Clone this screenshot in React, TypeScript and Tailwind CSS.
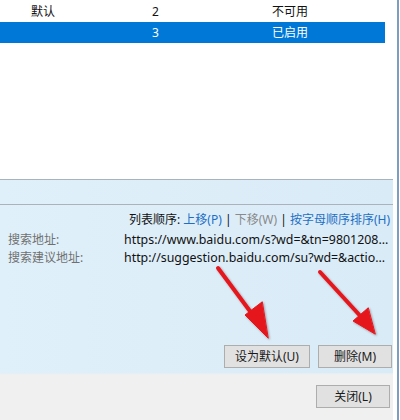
import React from "react";

const font = { fontFamily: '"Noto Sans", "Noto Sans CJK SC", sans-serif' };

function Btn({ children, w }: { children: React.ReactNode; w: string }) {
  return (
    <div
      className={`${w} h-[23px] flex items-center justify-center border border-[#adadad] bg-[#e1e1e1] text-[12px] text-[#1a1a1a]`}
    >
      {children}
    </div>
  );
}

export default function App() {
  return (
    <div className="relative w-[400px] h-[420px] bg-white flex overflow-hidden" style={font}>
      <div className="w-[393px] h-full flex flex-col">
        {/* list */}
        <div className="h-[180px] bg-white border-b border-[#a7b4bd] flex flex-col pt-[1px]">
          <div className="h-[21px] flex items-center text-[12px] text-[#111] pt-[1px]">
            <span className="w-[152px] pl-[31px]">默认</span>
            <span className="w-[120px]">2</span>
            <span>不可用</span>
          </div>
          <div className="h-[21px] w-[385px] flex items-center text-[12px] text-white bg-[#0078d7]">
            <span className="w-[152px] pl-[31px]"></span>
            <span className="w-[120px]">3</span>
            <span>已启用</span>
          </div>
        </div>
        {/* panel */}
        <div className="h-[193px] bg-gradient-to-r from-[#e0f0fa] to-[#d9ebf7] flex flex-col">
          <div className="h-[25px] border-b border-[#a9b3b9]"></div>
          <div className="h-[26px] flex items-center justify-end pr-[3px] text-[12px] pt-[4px]">
            <span className="text-[#111]">列表顺序:&nbsp;</span>
            <span className="text-[#1e6fc4]">上移(P)</span>
            <span className="text-[#111]">&nbsp;|&nbsp;</span>
            <span className="text-[#8a8a8a]">下移(W)</span>
            <span className="text-[#111]">&nbsp;|&nbsp;</span>
            <span className="text-[#1e6fc4]">按字母顺序排序(H)</span>
          </div>
          <div className="h-[18px] flex items-center text-[12px]">
            <span className="w-[124px] pl-[8px] text-[#707070]">搜索地址:</span>
            <span className="text-[#111] text-[12.4px]">https://www.baidu.com/s?wd=&amp;tn=9801208...</span>
          </div>
          <div className="h-[18px] flex items-center text-[12px]">
            <span className="w-[124px] pl-[8px] text-[#707070]">搜索建议地址:</span>
            <span className="text-[#111] text-[12.4px]">http://suggestion.baidu.com/su?wd=&amp;actio...</span>
          </div>
          <div className="flex-1"></div>
          <div className="flex justify-end gap-[8px] pr-[1px] pb-[5px]">
            <Btn w="w-[86px]">设为默认(U)</Btn>
            <Btn w="w-[74px]">删除(M)</Btn>
          </div>
        </div>
        <div className="h-[2px] bg-gradient-to-b from-[#e4eef4] to-[#f0f0f0]"></div>
        {/* bottom */}
        <div className="flex-1 bg-[#f0f0f0] flex justify-end pt-[10px] pr-[3px]">
          <Btn w="w-[74px]">关闭(L)</Btn>
        </div>
      </div>
      <div className="w-[4px] h-full bg-white"></div>
      <div className="w-[2px] h-full bg-[#7d9ec0]"></div>
      <div className="flex-1 h-full bg-white"></div>

      <svg className="absolute left-0 top-0 pointer-events-none" width="400" height="420">
        <defs>
          <filter id="sh" x="-20%" y="-20%" width="140%" height="140%">
            <feDropShadow dx="1" dy="1" stdDeviation="1.2" floodColor="#000" floodOpacity="0.35" />
          </filter>
        </defs>
        <g filter="url(#sh)" fill="#e5151c" stroke="#e5151c" strokeLinecap="round">
          <line x1="218" y1="268" x2="258" y2="322" strokeWidth="4" />
          <polygon points="268,338 245,315 262,302" strokeWidth="1" strokeLinejoin="round" />
          <line x1="320" y1="272" x2="364" y2="320" strokeWidth="4" />
          <polygon points="375,334 353,321 368,308" strokeWidth="1" strokeLinejoin="round" />
        </g>
      </svg>
    </div>
  );
}
